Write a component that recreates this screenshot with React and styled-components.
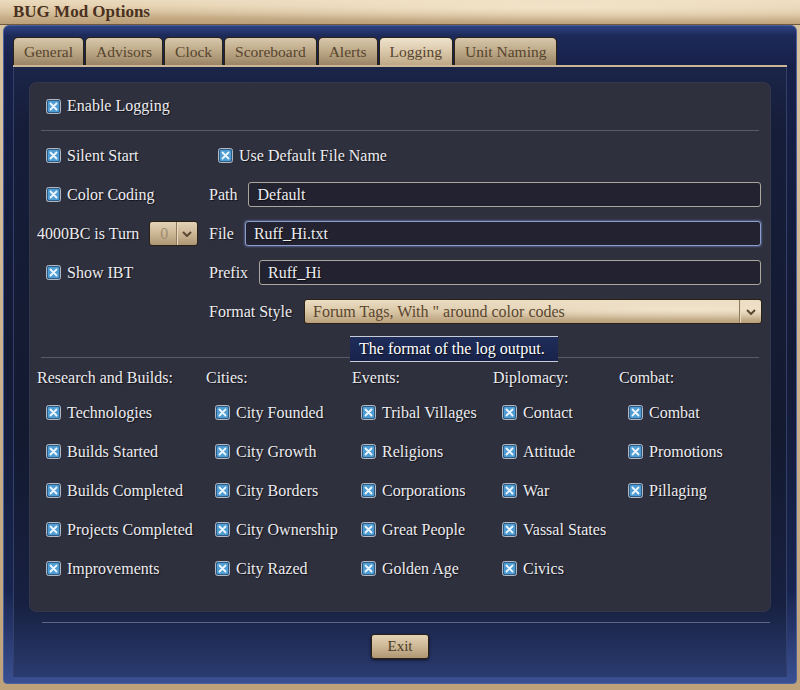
import React from "react";
import styled, { createGlobalStyle } from "styled-components";

const GlobalStyle = createGlobalStyle`
  html, body {
    margin: 0;
    padding: 0;
    height: 690px;
    overflow: hidden;
    background: #c4ab86;
    font-family: "Liberation Serif", "Times New Roman", serif;
  }
  * { box-sizing: border-box; }
`;

const tabs = ["General", "Advisors", "Clock", "Scoreboard", "Alerts", "Logging", "Unit Naming"];

const groups = [
  { title: "Research and Builds:", items: ["Technologies", "Builds Started", "Builds Completed", "Projects Completed", "Improvements"] },
  { title: "Cities:", items: ["City Founded", "City Growth", "City Borders", "City Ownership", "City Razed"] },
  { title: "Events:", items: ["Tribal Villages", "Religions", "Corporations", "Great People", "Golden Age"] },
  { title: "Diplomacy:", items: ["Contact", "Attitude", "War", "Vassal States", "Civics"] },
  { title: "Combat:", items: ["Combat", "Promotions", "Pillaging"] },
];

const CheckIcon = () => (
  <svg width="15" height="15" viewBox="0 0 15 15">
    <rect x="0.5" y="0.5" width="14" height="14" rx="2" fill="#2c5d88" stroke="#b4b8c0" />
    <rect x="2" y="2" width="11" height="11" rx="1" fill="#4f9dd3" />
    <path d="M4.5 4.5 L10.5 10.5 M10.5 4.5 L4.5 10.5" stroke="#eef7ff" strokeWidth="1.8" strokeLinecap="round" />
  </svg>
);

const Chevron = () => (
  <svg width="10" height="6" viewBox="0 0 10 6">
    <polyline points="1,1 5,5 9,1" fill="none" stroke="#5a4834" strokeWidth="2" />
  </svg>
);

const Check = ({ label }) => (
  <CheckItem>
    <CheckIcon />
    <span>{label}</span>
  </CheckItem>
);

export default function App() {
  return (
    <>
      <GlobalStyle />
      <Window>
        <TitleBar>BUG Mod Options</TitleBar>
        <Frame>
          <TabStrip>
            {tabs.map((t) => (
              <Tab key={t} $active={t === "Logging"}>{t}</Tab>
            ))}
          </TabStrip>
          <ContentBox>
            <Panel>
              <TopRow>
                <Check label="Enable Logging" />
              </TopRow>
              <Rule />
              <FormRow>
                <Check label="Silent Start" />
                <Check label="Use Default File Name" />
              </FormRow>
              <FormRow>
                <Check label="Color Coding" />
                <Field>
                  <Label>Path</Label>
                  <TextBox>Default</TextBox>
                </Field>
              </FormRow>
              <FormRow>
                <TurnCell>
                  <Label>4000BC is Turn</Label>
                  <TurnSelect>
                    <span>0</span>
                    <ArrowPart><Chevron /></ArrowPart>
                  </TurnSelect>
                </TurnCell>
                <Field>
                  <Label>File</Label>
                  <TextBox $focused>Ruff_Hi.txt</TextBox>
                </Field>
              </FormRow>
              <FormRow>
                <Check label="Show IBT" />
                <Field>
                  <Label>Prefix</Label>
                  <TextBox>Ruff_Hi</TextBox>
                </Field>
              </FormRow>
              <FormRow>
                <div />
                <Field $gap={12}>
                  <Label>Format Style</Label>
                  <FormatSelect>
                    <span>Forum Tags, With " around color codes</span>
                    <ArrowPart><Chevron /></ArrowPart>
                  </FormatSelect>
                </Field>
              </FormRow>
              <Rule $top={26} />
              <Groups>
                {groups.map((g) => (
                  <Group key={g.title}>
                    <GroupTitle>{g.title}</GroupTitle>
                    {g.items.map((i) => (
                      <Check key={i} label={i} />
                    ))}
                  </Group>
                ))}
              </Groups>
              <Tooltip>The format of the log output.</Tooltip>
            </Panel>
            <Rule $wide />
            <ExitButton>Exit</ExitButton>
          </ContentBox>
        </Frame>
      </Window>
    </>
  );
}

const Window = styled.div`
  width: 800px;
  height: 690px;
  display: flex;
  flex-direction: column;
  background: linear-gradient(180deg, #d9c4a2, #bea27a);
`;

const TitleBar = styled.div`
  height: 25px;
  padding-left: 13px;
  line-height: 24px;
  font-size: 17px;
  font-weight: bold;
  color: #4a3120;
  background:
    radial-gradient(ellipse at 70% 30%, rgba(255, 244, 222, 0.55), transparent 60%),
    radial-gradient(ellipse at 20% 80%, rgba(160, 130, 90, 0.25), transparent 50%),
    linear-gradient(180deg, #ebdabd 0%, #dcc6a3 55%, #bfa47e 100%);
  border-bottom: 1px solid #6f5a3c;
`;

const Frame = styled.div`
  flex: 1;
  margin: 0 3px 6px;
  padding: 11px 9px 6px;
  display: flex;
  flex-direction: column;
  border: 1px solid #4a5f9c;
  border-radius: 6px 6px 4px 4px;
  background: linear-gradient(180deg, #2e4384 0px, #1d2a58 10px, #172048 40px, #131a34 50%, #192550 86%, #3a5092 100%);
`;

const TabStrip = styled.div`
  display: flex;
  gap: 1px;
  height: 30px;
  border-bottom: 2px solid #cbb697;
`;

const Tab = styled.div`
  height: 28px;
  padding: 0 10px;
  display: flex;
  align-items: center;
  font-size: 15.5px;
  color: #56442f;
  border: 1px solid #2a2216;
  border-bottom: none;
  border-radius: 5px 5px 0 0;
  background: ${(p) =>
    p.$active
      ? "linear-gradient(180deg, #efe3cd 0%, #dac8aa 50%, #bea886 100%)"
      : "linear-gradient(180deg, #d8c7ac 0%, #bca886 50%, #9a8466 100%)"};
`;

const ContentBox = styled.div`
  flex: 1;
  display: flex;
  flex-direction: column;
  padding: 15px 15px 0;
  border-left: 1px solid #33416a;
  border-right: 1px solid #33416a;
  background: linear-gradient(180deg, #1b2548 0%, #161d39 10%, #131a30 60%, #172040 88%, #2a3b70 100%);
`;

const Panel = styled.div`
  position: relative;
  height: 530px;
  padding: 0 10px 0 8px;
  border-radius: 8px;
  background: #2e303e;
  box-shadow: inset 0 0 0 1px #34374a;
  color: #ececf0;
  font-size: 16px;
  text-shadow: 1px 1px 1px rgba(0, 0, 0, 0.65);
`;

const TopRow = styled.div`
  height: 48px;
  display: flex;
  align-items: center;
`;

const Rule = styled.div`
  height: 1px;
  background: #575a6c;
  margin: ${(p) => (p.$wide ? "10px 1px 0 13px" : `${p.$top || 0}px 2px 5px 4px`)};
  ${(p) => p.$wide && "background: #5c6584;"}
`;

const FormRow = styled.div`
  display: grid;
  grid-template-columns: 172px 1fr;
  height: 39px;
  align-items: center;
`;

const CheckItem = styled.div`
  display: flex;
  align-items: center;
  gap: 6px;
  height: 39px;
  padding-left: 9px;
  white-space: nowrap;

  svg {
    flex: none;
  }
`;

const Field = styled.div`
  display: flex;
  align-items: center;
  gap: ${(p) => p.$gap || 11}px;
`;

const Label = styled.span`
  white-space: nowrap;
`;

const TextBox = styled.div`
  flex: 1;
  height: 25px;
  padding-left: 8px;
  line-height: 23px;
  border-radius: 3px;
  background: #222230;
  border: 1px solid ${(p) => (p.$focused ? "#8d9ccc" : "#aca79c")};
  box-shadow: ${(p) => (p.$focused ? "0 0 2px 1px rgba(120, 140, 200, 0.5)" : "none")};
`;

const TurnCell = styled.div`
  display: flex;
  align-items: center;
  gap: 10px;
`;

const tanButton = `
  height: 25px;
  display: flex;
  align-items: center;
  border-radius: 3px;
  border: 1px solid #2a2216;
  background: linear-gradient(180deg, #e3d2b6 0%, #cdb896 50%, #ad9674 100%);
  text-shadow: none;
`;

const TurnSelect = styled.div`
  ${tanButton}
  width: 49px;

  span {
    width: 26px;
    padding-left: 10px;
    color: #a08e72;
  }
`;

const ArrowPart = styled.div`
  width: 22px;
  height: 100%;
  display: flex;
  align-items: center;
  justify-content: center;
  border-left: 1px solid #8f7a5c;
  box-shadow: inset 1px 0 0 #e8dac2;
`;

const FormatSelect = styled.div`
  ${tanButton}
  flex: 1;
  justify-content: space-between;
  margin-right: -1px;
  background:
    radial-gradient(ellipse at 85% 40%, rgba(255, 246, 228, 0.6), transparent 55%),
    linear-gradient(180deg, #ecdec4 0%, #d9c6a5 50%, #b9a07c 100%);

  span {
    padding-left: 8px;
    color: #5a4630;
  }
`;

const Groups = styled.div`
  display: grid;
  grid-template-columns: 169px 146px 141px 126px 1fr;
`;

const Group = styled.div`
  display: flex;
  flex-direction: column;
`;

const GroupTitle = styled.div`
  height: 30px;
  display: flex;
  align-items: center;
  white-space: nowrap;
`;

const Tooltip = styled.div`
  position: absolute;
  left: 321px;
  top: 254px;
  width: 208px;
  height: 26px;
  padding-left: 9px;
  line-height: 24px;
  color: #ffffff;
  border-top: 1px solid #c9cdd8;
  border-bottom: 1px solid #c9cdd8;
  background: linear-gradient(180deg, #1f2d5a, #18234a);
  white-space: nowrap;
`;

const ExitButton = styled.div`
  ${tanButton}
  width: 58px;
  margin: 11px auto 0;
  justify-content: center;
  font-size: 15px;
  color: #4a3a28;
  box-shadow: 0 1px 3px rgba(0, 0, 0, 0.7);
`;
